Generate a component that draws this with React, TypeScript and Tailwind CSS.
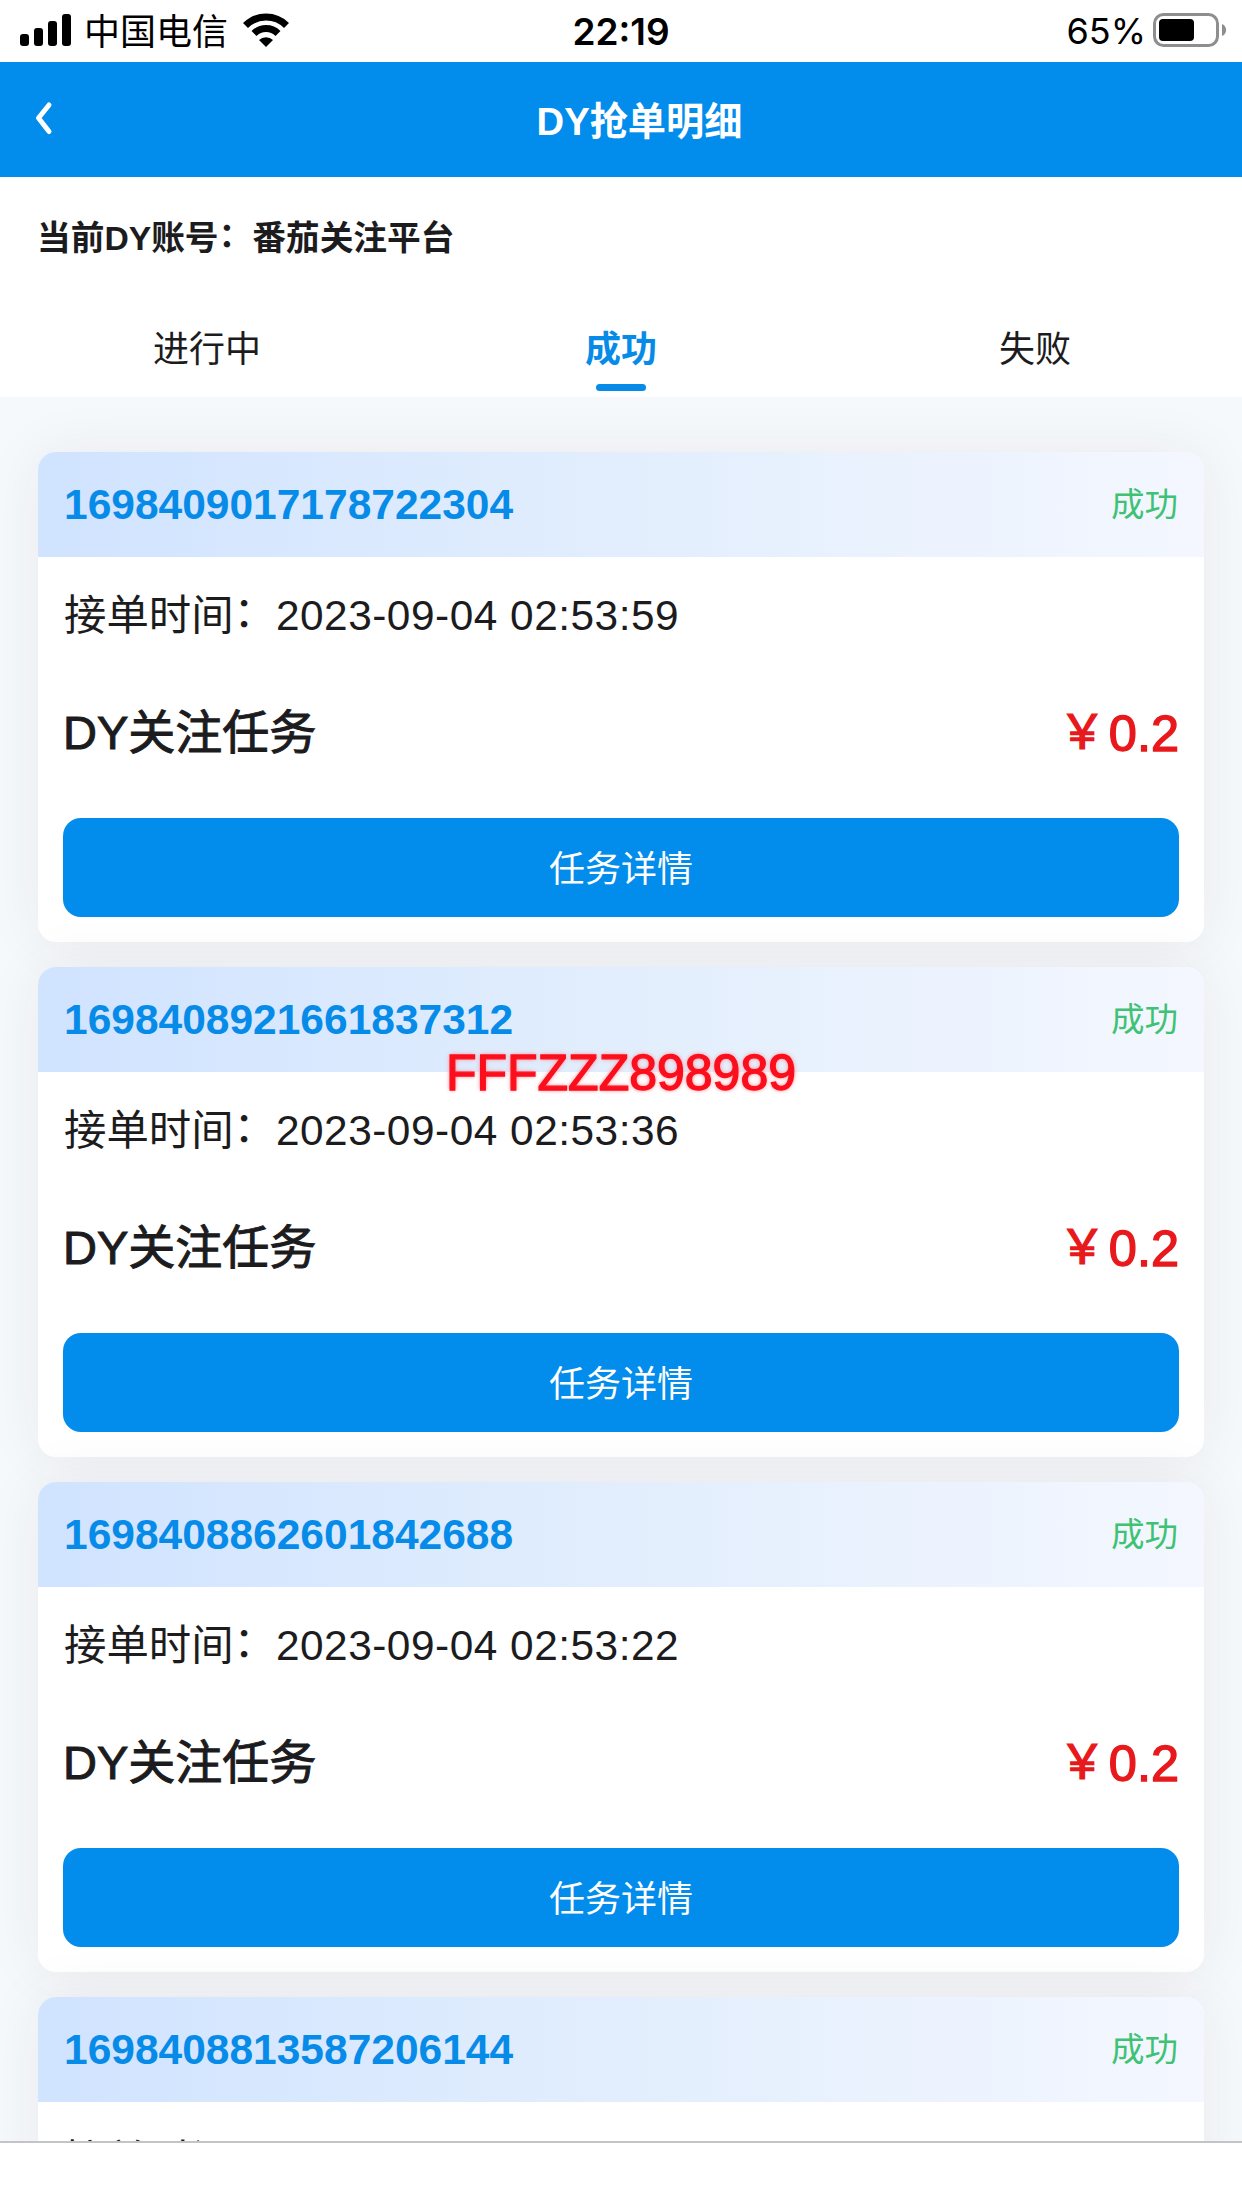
import { useState } from "react";

type Order = {
  id: string;
  time: string;
  title: string;
  price: string;
};

const tabs = ["进行中", "成功", "失败"];

const orders: Order[] = [
  { id: "1698409017178722304", time: "2023-09-04 02:53:59", title: "DY关注任务", price: "0.2" },
  { id: "1698408921661837312", time: "2023-09-04 02:53:36", title: "DY关注任务", price: "0.2" },
  { id: "1698408862601842688", time: "2023-09-04 02:53:22", title: "DY关注任务", price: "0.2" },
  { id: "1698408813587206144", time: "", title: "", price: "" },
];

function StatusBar() {
  return (
    <div className="grid h-[62px] shrink-0 grid-cols-3 items-center bg-white font-['Inter','Noto_Sans_CJK_SC',sans-serif] text-[36px] leading-none text-black">
      <div className="flex items-center pl-5">
        <svg width="52" height="34" viewBox="0 0 52 34" className="-mt-0.5">
          <rect x="0" y="21" width="9" height="12" rx="3" />
          <rect x="14" y="15" width="9" height="18" rx="3" />
          <rect x="28" y="8" width="9" height="25" rx="3" />
          <rect x="42" y="1" width="9" height="32" rx="3" />
        </svg>
        <span className="ml-3 mt-0.5 whitespace-nowrap">中国电信</span>
        <svg width="46" height="34" viewBox="0 0 46 34" className="ml-[15px] -mt-0.5">
          <path d="M2.500 12.500a29 29 0 0 1 41 0" fill="none" stroke="#000" strokeWidth="7" />
          <path d="M11 20.500a17 17 0 0 1 24 0" fill="none" stroke="#000" strokeWidth="7" />
          <path d="M16 27a10 10 0 0 1 14 0L23 34z" />
        </svg>
      </div>
      <div className="text-center text-[37px] font-semibold">22:19</div>
      <div className="flex items-center justify-end pr-[15px]">
        <span>65%</span>
        <svg width="74" height="34" viewBox="0 0 74 34" className="ml-[7px] -mt-0.5">
          <rect x="1.5" y="1.5" width="63" height="31" rx="9" fill="none" stroke="#8e8e8e" strokeWidth="3" />
          <rect x="6" y="6" width="35" height="22" rx="4" />
          <path d="M69 11c5.500 2 5.500 10 0 12z" fill="#8e8e8e" />
        </svg>
      </div>
    </div>
  );
}

function Colon() {
  return <span className="inline-block -translate-y-[3px]">：</span>;
}

function OrderCard({ order }: { order: Order }) {
  return (
    <div className="h-[490px] shrink-0 rounded-[18px] bg-white shadow-[0_0_60px_rgba(90,10,20,0.065)]">
      <div className="flex h-[105px] items-center justify-between rounded-t-[18px] bg-linear-to-r from-[#d0e3ff] via-[#e2eefd] to-[#f4f7ff] px-[26px]">
        <span className="text-[42.500px] font-bold text-[#078be8]">{order.id}</span>
        <span className="pt-[2px] text-[33.500px] text-[#3fc274]">成功</span>
      </div>
      <div className="px-[25px]">
        <div className="flex h-[118px] items-center pl-px text-[42.400px]">
          接单时间
          <Colon />
          <span className="tracking-[0.5px]">{order.time}</span>
        </div>
        {order.title && (
          <>
            <div className="flex h-[118px] items-center justify-between">
              <span className="-mt-[2px] text-[47px] [-webkit-text-stroke:1px_#1c1c1e]">{order.title}</span>
              <span className="-mt-px flex items-center text-[50.500px] text-[#e8191c] [-webkit-text-stroke:1.4px_#e8191c]">
                <span className="-mt-[3px] w-[50px] text-[47px]">￥</span>
                {order.price}
              </span>
            </div>
            <button className="mt-[25px] h-[99px] w-full rounded-[18px] bg-[#028ceb] pt-[5px] text-[36px] text-white">
              任务详情
            </button>
          </>
        )}
      </div>
    </div>
  );
}

export default function App() {
  const [active, setActive] = useState(1);

  return (
    <div className="relative flex h-[2208px] w-[1242px] flex-col overflow-hidden bg-white font-['Liberation_Sans','Noto_Sans_CJK_SC',sans-serif] text-[#1c1c1e]">
      <StatusBar />

      <header className="grid h-[115px] shrink-0 grid-cols-[36px_1fr] items-center bg-[#028ceb] pl-[33px] text-white">
        <svg width="21" height="38" viewBox="0 0 21 38" fill="none" stroke="#fff" strokeWidth="5" strokeLinecap="round" strokeLinejoin="round" className="-mt-0.5">
          <path d="M16 5L5.500 18L16 31.500" />
        </svg>
        <h1 className="pt-[5px] pr-[32px] text-center text-[38.200px] font-bold">DY抢单明细</h1>
      </header>

      <div className="flex h-[220px] shrink-0 flex-col">
        <div className="flex h-[122px] items-center pl-[37px] text-[33.700px] font-bold">
          当前DY账号
          <Colon />
          番茄关注平台
        </div>
        <div className="grid h-[98px] grid-cols-3">
          {tabs.map((tab, i) => (
            <button key={tab} onClick={() => setActive(i)} className="flex flex-col items-center text-[36px] leading-[54px]">
              <span className={i === active ? "mt-[24px] font-bold text-[#078be8]" : "mt-[24px]"}>{tab}</span>
              {i === active && <span className="mt-[7px] h-[7px] w-[50px] rounded-full bg-[#078be8]" />}
            </button>
          ))}
        </div>
      </div>

      <main className="flex min-h-0 flex-1 flex-col gap-[25px] overflow-hidden bg-[#f5f9fc] px-[38px] pt-[55px]">
        {orders.map((order) => (
          <OrderCard key={order.id} order={order} />
        ))}
      </main>

      <footer className="h-[67px] shrink-0 border-t-2 border-[#c4c4c6] bg-white" />

      {/* watermark */}
      <div className="pointer-events-none absolute inset-x-0 top-[1044px] text-center text-[50px] leading-[58px] text-[#fb0f1c] [-webkit-text-stroke:1.3px_#fb0f1c] [text-shadow:0_0_5px_#ff8a94,0_0_3px_#ffb0b8]">
        FFFZZZ898989
      </div>
    </div>
  );
}
